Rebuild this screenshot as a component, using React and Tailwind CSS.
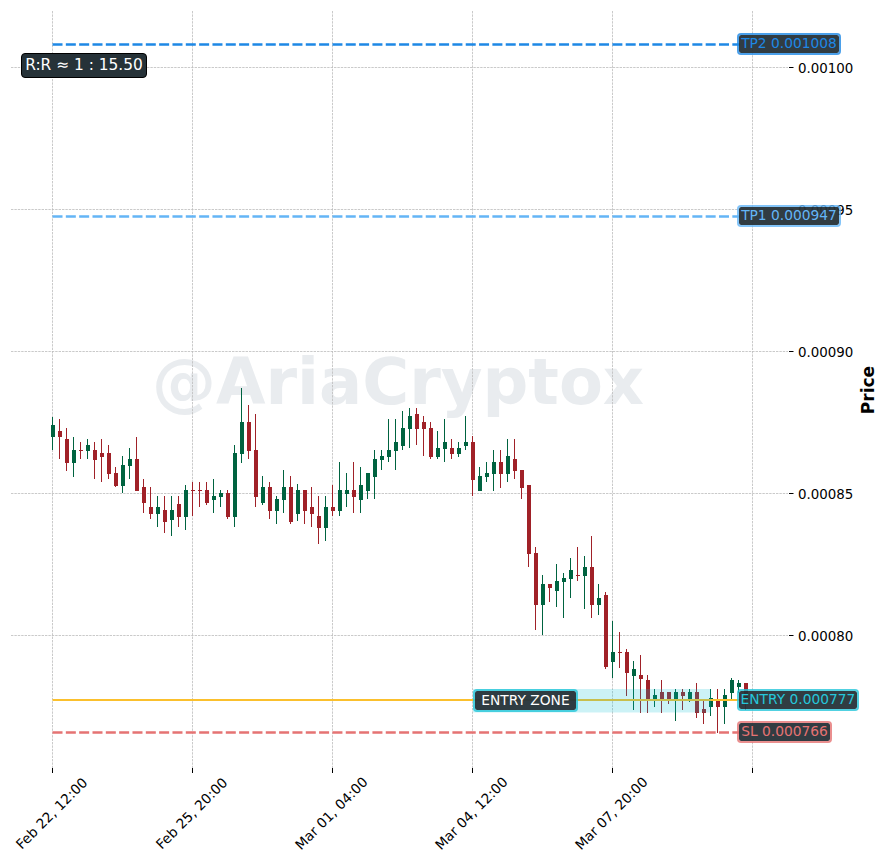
const C = [
["g",417,425,437,450],["r",419,431,437,459],["r",428,439,463,471],["g",437,450,463,477],["r",442,450,451,459],
["g",439,445,451,459],["r",442,450,460,479],["r",439,453,457,482],["r",445,453,474,479],["r",467,473,486,487],
["g",456,465,486,493],["g",448,459,466,479],["r",437,459,491,491],["r",479,487,503,513],["r",487,507,514,519],
["g",496,507,514,527],["r",496,510,522,533],["g",496,510,520,536],["r",496,504,517,527],["g",485,490,517,530],
["r",482,490,491,516],["r",482,490,491,507],["r",482,490,503,505],["g",479,496,500,513],["g",490,493,497,507],
["r",490,493,517,519],["g",445,453,517,527],["g",388,422,454,463],["r",405,422,451,459],["r",414,450,497,507],
["g",476,487,503,505],["r",482,487,511,519],["g",496,499,511,524],["g",470,487,500,513],["r",476,487,522,524],
["g",484,490,514,521],["r",490,490,511,524],["r",487,507,514,527],["r",496,516,528,544],["g",496,507,528,541],
["r",485,507,511,516],["g",462,490,511,516],["g",473,490,494,507],["r",462,490,497,513],["g",467,485,500,513],
["g",473,473,491,499],["g",450,459,477,499],["g",450,456,460,470],["g",419,450,457,462],["g",419,442,451,470],
["g",411,428,446,450],["g",408,416,429,448],["r",408,414,429,445],["r",416,422,429,456],["r",422,428,457,459],
["g",431,448,457,459],["g",419,442,449,462],["r",439,448,454,459],["g",442,448,454,457],["g",416,442,446,450],
["r",436,442,480,496],["g",467,476,491,491],["g",462,473,477,482],["g",450,462,474,491],["r",450,462,474,488],
["g",439,456,474,482],["r",439,459,471,479],["r",470,470,488,499],["r",485,485,554,567],["r",547,553,605,630],
["g",575,584,605,635],["r",584,584,588,602],["g",564,581,591,607],["g",573,578,582,618],["g",558,570,579,598],
["r",547,575,576,581],["g",556,567,576,609],["r",536,567,605,618],["g",584,598,605,615],["r",592,595,667,669],
["g",621,652,662,678],["r",632,652,653,668],["r",649,652,673,696],["g",661,669,676,710],["r",655,675,679,713],
["r",675,680,699,713],["g",689,695,699,707],["r",680,692,699,713],["r",692,692,699,704],["g",689,692,699,721],
["r",689,692,696,710],["g",689,692,699,702],["r",683,692,713,718],["r",700,709,713,724],["g",689,698,707,716],
["r",689,700,707,733],["g",689,695,707,724],["g",678,680,693,700],["g",680,683,687,693],["r",683,683,698,710],
];
const VX = [52.5,192.5,332.5,472.5,612.5,752.5];
const HY = [67.5,209.5,351.5,493.5,635.5];
const YL = ["0.00100","0.00095","0.00090","0.00085","0.00080"];
const XL = ["Feb 22, 12:00","Feb 25, 20:00","Mar 01, 04:00","Mar 04, 12:00","Mar 07, 20:00"];

function Chart() {
  return (
    <svg className="absolute left-0 top-0" width="887" height="864" viewBox="0 0 887 864">
      <g stroke="#bcbcbc" strokeWidth="0.8" strokeDasharray="2.4 1">
        {VX.map((x) => <line key={x} x1={x} x2={x} y1="11" y2="768" />)}
        {HY.map((y) => <line key={y} x1="11" x2="788" y1={y} y2={y} />)}
      </g>
      <g stroke="#000" strokeWidth="1">
        {VX.map((x) => <line key={x} x1={x} x2={x} y1="768" y2="773" />)}
        {HY.map((y) => <line key={y} x1="789" x2="793.5" y1={y} y2={y} />)}
      </g>
      {C.map(([c, h, t, b, l], i) => (
        <g key={i} fill={c === "g" ? "#006340" : "#A02128"}>
          <rect x={52 + 7 * i} y={h} width="1" height={l - h} />
          <rect x={51 + 7 * i} y={t} width="4" height={Math.max(b - t, 1)} />
        </g>
      ))}
      <line x1="52.5" x2="740" y1="44.5" y2="44.5" stroke="#1E88E5" strokeWidth="2.6" strokeDasharray="10 3.33" />
      <line x1="52.5" x2="740" y1="216.5" y2="216.5" stroke="#64B5F6" strokeWidth="2.6" strokeDasharray="10 3.33" />
      <line x1="52.5" x2="740" y1="700" y2="700" stroke="#FBC02D" strokeWidth="2" />
      <line x1="52.5" x2="740" y1="732.5" y2="732.5" stroke="#E57373" strokeWidth="2.6" strokeDasharray="10 3.33" />
      <rect x="473" y="689" width="238" height="23.5" fill="#00BCD4" fillOpacity="0.2" />
    </svg>
  );
}

const pill = "absolute flex items-center justify-center whitespace-nowrap rounded-[4px] border-2 bg-[#263238]/95 bg-clip-padding text-[13.8px] leading-none";

export default function App() {
  return (
    <div className="relative h-[864px] w-[887px] overflow-hidden bg-white font-['DejaVu_Sans',sans-serif] text-black">
      <div className="absolute left-[152px] top-[344px] whitespace-nowrap text-[64px] font-bold leading-[76px] text-[#e9ecef]">@AriaCryptox</div>
      <Chart />

      <div className="absolute left-[798px] top-[61px] flex flex-col gap-[127px]">
        {YL.map((t) => <div key={t} className="h-[15px] text-[13.4px] leading-[15px]">{t}</div>)}
      </div>

      <div className="absolute left-[868px] top-[390px] -translate-x-1/2 -translate-y-1/2 -rotate-90 text-[17px] font-bold leading-none">Price</div>

      <div className="absolute left-[-18px] top-[806px] flex">
        {XL.map((t) => (
          <div key={t} className="flex h-[16px] w-[140px] items-center justify-center">
            <span className="-rotate-45 whitespace-nowrap text-[13.7px] leading-none">{t}</span>
          </div>
        ))}
      </div>

      <div className="absolute left-[21px] top-[53px] flex h-[25px] w-[126px] items-center justify-center whitespace-nowrap rounded-[4px] border border-black bg-[#263238] text-[15.4px] leading-none text-white">R:R ≈ 1 : 15.50</div>

      <div className={`${pill} left-[737px] top-[33px] h-[22px] w-[104px] border-[#1E88E5]/80 text-[#1E88E5]`}>TP2 0.001008</div>
      <div className={`${pill} left-[737px] top-[205px] h-[22px] w-[104px] border-[#64B5F6]/80 text-[#64B5F6]`}>TP1 0.000947</div>
      <div className={`${pill} left-[473px] top-[689px] h-[23px] w-[105px] border-[#26C6DA]/80 text-white`}>ENTRY ZONE</div>
      <div className={`${pill} left-[737px] top-[689px] h-[22px] w-[122px] border-[#26C6DA]/80 text-[#26C6DA]`}>ENTRY 0.000777</div>
      <div className={`${pill} left-[737px] top-[721px] h-[22px] w-[95px] border-[#E57373]/80 text-[#E57373]`}>SL 0.000766</div>
    </div>
  );
}
